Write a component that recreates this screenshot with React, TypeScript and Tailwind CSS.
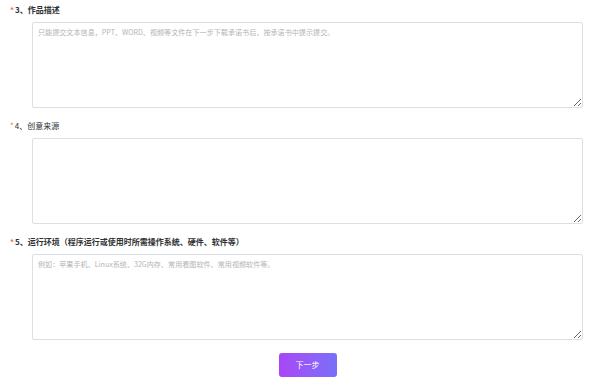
const fields = [
  {
    no: "3",
    title: "作品描述",
    bold: true,
    placeholder: "只能提交文本信息，PPT、WORD、视频等文件在下一步下载承诺书后，按承诺书中提示提交。",
  },
  { no: "4", title: "创意来源", bold: false, placeholder: "" },
  {
    no: "5",
    title: "运行环境（程序运行或使用时所需操作系统、硬件、软件等）",
    bold: true,
    placeholder: "例如：苹果手机、Linux系统、32G内存、常用看图软件、常用视频软件等。",
  },
];

export default function App() {
  return (
    <div
      className="w-[600px] h-[386px] bg-white pt-[3px] text-[#303133]"
      style={{ fontFamily: '"Microsoft YaHei", "Noto Sans CJK SC", sans-serif' }}
    >
      {fields.map((f, i) => (
        <div key={f.no} className={i > 0 ? "mt-[11px]" : ""}>
          <div className={`h-[14px] flex items-center pl-[10px] text-[8px] ${f.bold ? "font-bold" : "font-normal"}`}>
            <span className="text-[#f56c6c] mr-[1px]">*</span>
            <span>
              {f.no}、{f.title}
            </span>
          </div>
          <div className="mt-[5px] pl-[32px] pr-[17px]">
            <textarea
              placeholder={f.placeholder}
              className="block w-full h-[86px] border border-[#dcdfe6] rounded-[2px] px-[5px] py-[4px] text-[7.1px] leading-[11px] placeholder:text-[#b4b4b4] outline-none"
            />
          </div>
        </div>
      ))}
      <div className="flex justify-center mt-[13px] pl-[32px] pr-[17px]">
        <button className="w-[58px] h-[24px] rounded-[3px] bg-gradient-to-r from-[#a845f6] to-[#786ff9] text-white text-[8px]">
          下一步
        </button>
      </div>
    </div>
  );
}
